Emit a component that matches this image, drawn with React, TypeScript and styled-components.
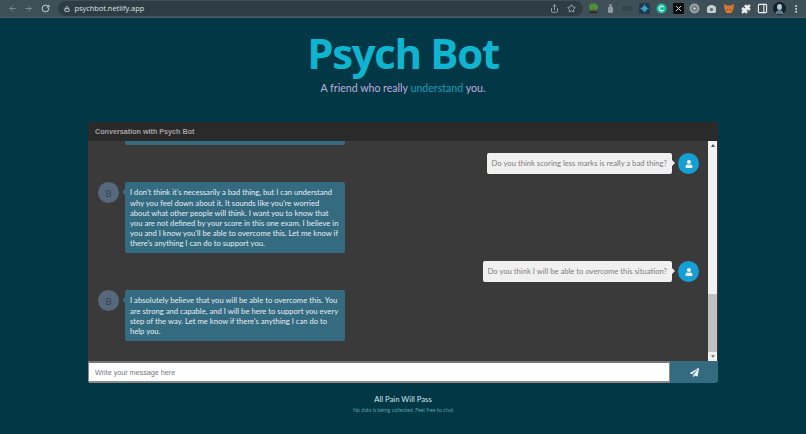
import React from 'react';
import styled, { createGlobalStyle } from 'styled-components';
import {
	ArrowLeft,
	ArrowRight,
	EllipsisVertical,
	Lock,
	PanelRight,
	Puzzle,
	RotateCw,
	Share,
	Star,
} from 'lucide-react';
import { FaPaperPlane, FaUser } from 'react-icons/fa';

const GlobalStyle = createGlobalStyle`
	html, body {
		margin: 0;
		padding: 0;
		background: #023745;
	}
	* {
		box-sizing: border-box;
	}
`;

const Page = styled.div`
	width: 806px;
	height: 434px;
	overflow: hidden;
	background: #023745;
	display: flex;
	flex-direction: column;
	align-items: center;
	font-family: 'Lato', sans-serif;
`;

const BrowserBar = styled.div`
	width: 100%;
	height: 18px;
	flex: none;
	background: #3e4f57;
	border-bottom: 1px solid #4b5d66;
	display: flex;
	align-items: center;
	padding: 0 3px 0 4px;
	color: #dfe5e8;
`;

const NavButton = styled.div<{ $dim?: boolean }>`
	width: 16.5px;
	height: 16px;
	flex: none;
	display: flex;
	align-items: center;
	justify-content: center;
	color: ${p => (p.$dim ? '#87969d' : '#e4e9eb')};
`;

const AddressPill = styled.div`
	width: 525px;
	height: 15px;
	margin: 0 3px 0 4px;
	flex: none;
	background: #2e3c43;
	border-radius: 8px;
	display: flex;
	align-items: center;
	padding: 0 3px 0 6px;
	color: #d5dcdf;
`;

const UrlText = styled.span`
	margin-left: 5px;
	flex: 1;
	font-size: 7.4px;
	line-height: 15px;
	font-family: 'Open Sans', sans-serif;
	color: #dbe1e4;
`;

const PillIcon = styled.div`
	width: 17px;
	height: 15px;
	flex: none;
	display: flex;
	align-items: center;
	justify-content: center;
	color: #aeb8bd;
`;

const ExtensionTray = styled.div`
	display: flex;
	align-items: center;
	flex: none;
`;

const ExtensionSlot = styled.div`
	width: 16.85px;
	height: 16px;
	flex: none;
	display: flex;
	align-items: center;
	justify-content: center;
	color: #eef1f2;
`;

const Hero = styled.header`
	text-align: center;
	padding-top: 7px;
	height: 104px;
	flex: none;
`;

const Title = styled.h1`
	margin: 0;
	font-family: 'Open Sans', sans-serif;
	font-weight: 700;
	font-size: 42px;
	line-height: 56px;
	letter-spacing: -1.35px;
	color: #0fb4d0;
`;

const Tagline = styled.p`
	margin: 0;
	font-size: 10.6px;
	line-height: 14px;
	color: #c0aedd;
`;

const Highlight = styled.span`
	color: #1f9dba;
`;

const ChatPanel = styled.section`
	width: 630px;
	height: 261px;
	flex: none;
	display: flex;
	flex-direction: column;
	background: #3a3a3a;
	border-radius: 3px 3px 4px 4px;
	overflow: hidden;
`;

const ChatHeader = styled.div`
	height: 19px;
	flex: none;
	background: #2a2a2a;
	padding-left: 7px;
	font-family: 'Liberation Sans', sans-serif;
	font-weight: 700;
	font-size: 7.2px;
	line-height: 19px;
	color: #a3a3a3;
`;

const ChatBody = styled.div`
	flex: 1;
	min-height: 0;
	display: flex;
`;

const MessageList = styled.div`
	flex: 1;
	min-width: 0;
	overflow: hidden;
	display: flex;
	flex-direction: column;
	justify-content: flex-end;
	gap: 8px;
	padding: 0 9px 20px 10px;
`;

const MessageRow = styled.div<{ $mine?: boolean }>`
	display: flex;
	flex: none;
	flex-direction: ${p => (p.$mine ? 'row-reverse' : 'row')};
	gap: 6px;
	align-items: flex-start;
`;

const Avatar = styled.div<{ $mine?: boolean }>`
	width: 21px;
	height: 21px;
	flex: none;
	border-radius: 50%;
	background: ${p => (p.$mine ? '#169fd4' : '#56687b')};
	color: ${p => (p.$mine ? '#f2f6f8' : '#36424e')};
	display: flex;
	align-items: center;
	justify-content: center;
	font-size: 10px;
`;

const Bubble = styled.div<{ $mine?: boolean }>`
	position: relative;
	flex: none;
	width: ${p => (p.$mine ? 'auto' : '220px')};
	padding: 5px;
	border-radius: 2px;
	background: ${p => (p.$mine ? '#f0f0f0' : '#356b80')};
	color: ${p => (p.$mine ? '#7d7d7d' : '#e4eef2')};
	font-size: 7.66px;
	line-height: 10.15px;
	white-space: pre;

	&::before {
		content: '';
		position: absolute;
		top: 7px;
		${p => (p.$mine ? 'right: -3px;' : 'left: -3px;')}
		border-top: 3px solid transparent;
		border-bottom: 3px solid transparent;
		${p =>
			p.$mine
				? 'border-left: 3px solid #f0f0f0;'
				: 'border-right: 3px solid #356b80;'}
	}
`;

const ClippedBubble = styled(Bubble)`
	height: 30px;
	margin-left: 27px;
`;

const Scrollbar = styled.div`
	width: 9px;
	flex: none;
	margin-right: 1px;
	display: flex;
	flex-direction: column;
	background: #f1f1f1;
`;

const ScrollArrow = styled.div<{ $down?: boolean }>`
	height: 9px;
	flex: none;
	display: flex;
	align-items: center;
	justify-content: center;

	&::after {
		content: '';
		border-left: 2.5px solid transparent;
		border-right: 2.5px solid transparent;
		${p =>
			p.$down
				? 'border-top: 3px solid #7d7d7d;'
				: 'border-bottom: 3px solid #505050;'}
	}
`;

const ScrollTrack = styled.div`
	flex: 1;
	display: flex;
	flex-direction: column;
	justify-content: flex-end;
`;

const ScrollThumb = styled.div`
	height: 58px;
	background: #c1c1c1;
`;

const Composer = styled.form`
	height: 22px;
	flex: none;
	margin: 0;
	display: flex;
	background: #356b80;
`;

const MessageInput = styled.input`
	width: 582px;
	height: 100%;
	flex: none;
	padding: 0 6px;
	margin: 0;
	background: #ffffff;
	border: 1px solid #8a8a8a;
	border-width: 2px 1px;
	border-top-color: #757575;
	border-radius: 0;
	outline: none;
	font-family: 'Liberation Sans', sans-serif;
	font-size: 7.2px;

	&::placeholder {
		color: #777777;
		opacity: 1;
	}
`;

const SendButton = styled.button`
	flex: 1;
	padding: 0;
	border: none;
	background: #356b80;
	color: #e8f0f3;
	display: flex;
	align-items: center;
	justify-content: center;
`;

const Footer = styled.footer`
	text-align: center;
	padding-top: 11px;
`;

const FooterTitle = styled.div`
	font-size: 7.7px;
	line-height: 11px;
	color: #d5e6ea;
`;

const FooterNote = styled.div`
	font-size: 5.3px;
	line-height: 11px;
	color: #5a9fab;
`;

const SmallIcon = { size: 9, strokeWidth: 2.2 };

function TreeIcon() {
	return (
		<svg width="11" height="11" viewBox="0 0 11 11">
			<ellipse cx="5.5" cy="4" rx="4.5" ry="3.5" fill="#4f8f3a" />
			<rect x="4.7" y="6" width="1.6" height="3" fill="#6b4a2a" />
			<rect x="1.5" y="8.6" width="8" height="1.4" fill="#20261c" />
		</svg>
	);
}

function BottleIcon() {
	return (
		<svg width="9" height="11" viewBox="0 0 9 11">
			<rect x="3" y="1" width="3" height="3" fill="#7f8a8d" />
			<rect x="2" y="4" width="5" height="6" rx="1" fill="#8f9a9d" />
		</svg>
	);
}

function CodeIcon() {
	return (
		<svg width="11" height="9" viewBox="0 0 11 9" fill="none" stroke="#26353d" strokeWidth="1">
			<path d="M2.5 2 1 4.5 2.5 7M8.5 2 10 4.5 8.5 7" />
			<circle cx="5.5" cy="4.5" r="1.4" />
		</svg>
	);
}

function SnowIcon() {
	return (
		<svg width="11" height="11" viewBox="0 0 11 11">
			<rect width="11" height="11" rx="1.5" fill="#1d3b4d" />
			<circle cx="5.5" cy="5.5" r="2.6" fill="#3f9cc4" />
			<path d="M5.5 1.5v8M1.5 5.5h8" stroke="#3f9cc4" strokeWidth="1" />
		</svg>
	);
}

function GrammarlyIcon() {
	return (
		<svg width="11" height="11" viewBox="0 0 11 11">
			<circle cx="5.5" cy="5.5" r="5" fill="#17c2a0" />
			<path d="M7.5 4a2.4 2.4 0 1 0 0 3" fill="none" stroke="#eafaf6" strokeWidth="1.2" />
		</svg>
	);
}

function BlackSquareIcon() {
	return (
		<svg width="11" height="11" viewBox="0 0 11 11">
			<rect width="11" height="11" rx="1" fill="#0c0f10" />
			<path d="M3 3l5 5M8 3 3 8" stroke="#d8dcdc" strokeWidth="1" />
		</svg>
	);
}

function PlayIcon() {
	return (
		<svg width="11" height="11" viewBox="0 0 11 11">
			<circle cx="5.5" cy="5.5" r="5" fill="#98a3a7" />
			<circle cx="5.5" cy="5.5" r="3" fill="#6c7a80" />
			<path d="M4.6 4v3l2.4-1.5z" fill="#dfe3e5" />
		</svg>
	);
}

function CameraIcon() {
	return (
		<svg width="11" height="10" viewBox="0 0 11 10">
			<rect x="1" y="2" width="9" height="7" rx="1.5" fill="#c6cdd0" />
			<rect x="3.5" y="1" width="4" height="2" fill="#c6cdd0" />
			<circle cx="5.5" cy="5.5" r="1.6" fill="#59676e" />
		</svg>
	);
}

function FoxIcon() {
	return (
		<svg width="12" height="11" viewBox="0 0 12 11">
			<path d="M1 1l3.5 1.5h3L11 1l-.6 5L8.5 10h-5L1.6 6z" fill="#d9772b" />
			<path d="M4 6.500h1.200M6.800 6.500H8" stroke="#70401c" strokeWidth="1" />
		</svg>
	);
}

function ProfileIcon() {
	return (
		<svg width="13" height="13" viewBox="0 0 13 13">
			<circle cx="6.500" cy="6.500" r="6.500" fill="#11202c" />
			<ellipse cx="6.500" cy="5" rx="2.500" ry="3" fill="#b8c6cf" />
			<path d="M2.500 12c.4-3 2-4 4-4s3.600 1 4 4z" fill="#5d7c93" />
		</svg>
	);
}

const extensions = [
	<TreeIcon key="tree" />,
	<BottleIcon key="bottle" />,
	<CodeIcon key="code" />,
	<SnowIcon key="snow" />,
	<GrammarlyIcon key="grammarly" />,
	<BlackSquareIcon key="square" />,
	<PlayIcon key="play" />,
	<CameraIcon key="camera" />,
	<FoxIcon key="fox" />,
	<Puzzle key="puzzle" size={10} fill="#eef1f2" strokeWidth={1.5} />,
	<PanelRight key="panel" size={11} strokeWidth={2.4} />,
	<ProfileIcon key="profile" />,
	<EllipsisVertical key="more" size={10} strokeWidth={2.4} />,
];

type Message = { mine?: boolean; text: string };

const messages: Message[] = [
	{ mine: true, text: 'Do you think scoring less marks is really a bad thing?' },
	{
		text: "I don't think it's necessarily a bad thing, but I can understand\nwhy you feel down about it. It sounds like you're worried\nabout what other people will think. I want you to know that\nyou are not defined by your score in this one exam. I believe in\nyou and I know you'll be able to overcome this. Let me know if\nthere's anything I can do to support you.",
	},
	{ mine: true, text: 'Do you think I will be able to overcome this situation?' },
	{
		text: "I absolutely believe that you will be able to overcome this. You\nare strong and capable, and I will be here to support you every\nstep of the way. Let me know if there's anything I can do to\nhelp you.",
	},
];

export default function App() {
	return (
		<Page>
			<GlobalStyle />
			<BrowserBar>
				<NavButton $dim>
					<ArrowLeft {...SmallIcon} />
				</NavButton>
				<NavButton $dim>
					<ArrowRight {...SmallIcon} />
				</NavButton>
				<NavButton>
					<RotateCw {...SmallIcon} />
				</NavButton>
				<AddressPill>
					<Lock size={6} strokeWidth={3} />
					<UrlText>psychbot.netlify.app</UrlText>
					<PillIcon>
						<Share size={9} />
					</PillIcon>
					<PillIcon>
						<Star size={9} strokeWidth={2.2} />
					</PillIcon>
				</AddressPill>
				<ExtensionTray>
					{extensions.map((icon, i) => (
						<ExtensionSlot key={i}>{icon}</ExtensionSlot>
					))}
				</ExtensionTray>
			</BrowserBar>

			<Hero>
				<Title>Psych Bot</Title>
				<Tagline>
					A friend who really <Highlight>understand</Highlight> you.
				</Tagline>
			</Hero>

			<ChatPanel>
				<ChatHeader>Conversation with Psych Bot</ChatHeader>
				<ChatBody>
					<MessageList>
						<ClippedBubble />
						{messages.map((m, i) => (
							<MessageRow key={i} $mine={m.mine}>
								<Avatar $mine={m.mine}>
									{m.mine ? <FaUser size={8} /> : 'B'}
								</Avatar>
								<Bubble $mine={m.mine}>{m.text}</Bubble>
							</MessageRow>
						))}
					</MessageList>
					<Scrollbar>
						<ScrollArrow />
						<ScrollTrack>
							<ScrollThumb />
						</ScrollTrack>
						<ScrollArrow $down />
					</Scrollbar>
				</ChatBody>
				<Composer onSubmit={e => e.preventDefault()}>
					<MessageInput placeholder="Write your message here" />
					<SendButton type="submit" aria-label="Send">
						<FaPaperPlane size={9} />
					</SendButton>
				</Composer>
			</ChatPanel>

			<Footer>
				<FooterTitle>All Pain Will Pass</FooterTitle>
				<FooterNote>No data is being collected. Feel free to chat</FooterNote>
			</Footer>
		</Page>
	);
}
